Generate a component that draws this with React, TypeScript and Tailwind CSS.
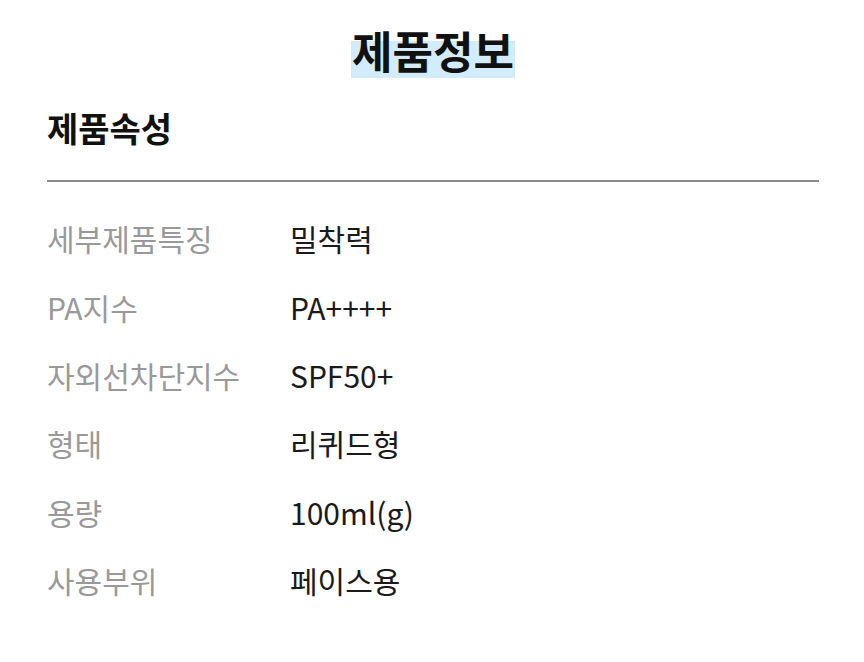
export default function App() {
  const rows: [string, string][] = [
    ["세부제품특징", "밀착력"],
    ["PA지수", "PA++++"],
    ["자외선차단지수", "SPF50+"],
    ["형태", "리퀴드형"],
    ["용량", "100ml(g)"],
    ["사용부위", "페이스용"],
  ];
  return (
    <div
      className="w-[864px] h-[662px] bg-white pl-[47px] pr-[45px] pt-[24px]"
      style={{ fontFamily: '"Noto Sans CJK KR", "Noto Sans", sans-serif' }}
    >
      <div className="text-center text-[44px] leading-[52px] font-bold text-[#111]">
        <span className="bg-[linear-gradient(transparent_36%,#d3ecfb_36%,#d3ecfb_94%,transparent_94%)] px-[1px]">
          제품정보
        </span>
      </div>
      <div className="mt-[32px] text-[34px] leading-[40px] font-bold text-[#111]">제품속성</div>
      <div className="mt-[32px] h-[2px] bg-[#8a8a8a]" />
      <div className="mt-[22px] flex flex-col">
        {rows.map(([k, v]) => (
          <div key={k} className="flex items-center h-[68.4px]">
            <div className="w-[243px] shrink-0 text-[30px] text-[#999999] leading-[40px]">{k}</div>
            <div className="text-[30px] text-[#1a1a1a] leading-[40px]">{v}</div>
          </div>
        ))}
      </div>
    </div>
  );
}
